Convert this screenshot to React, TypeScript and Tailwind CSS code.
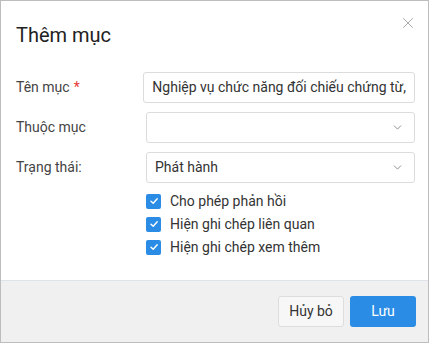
import { ChevronDown, X } from 'lucide-react'

type FieldProps = {
  label: string
  required?: boolean
  children: React.ReactNode
}

function Field({ label, required, children }: FieldProps) {
  return (
    <div className="flex items-center h-[31px]">
      <label className="w-[130px] text-[14px] text-[#444]">
        {label}
        {required && <span className="text-[#e53935] ml-[4px]">*</span>}
      </label>
      <div className="flex-1">{children}</div>
    </div>
  )
}

function Select({ value }: { value?: string }) {
  return (
    <div className="flex items-center justify-between h-[31px] border border-[#dcdcdc] rounded-[3px] pl-[8px] pr-[10px] text-[14px] text-[#333]">
      <span>{value}</span>
      <ChevronDown size={13} strokeWidth={1.5} className="text-[#777]" />
    </div>
  )
}

function Check({ label }: { label: string }) {
  return (
    <div className="flex items-center gap-[9px] h-[22px]">
      <span className="w-[15px] h-[15px] rounded-[2px] bg-[#2b8ce6] flex items-center justify-center">
        <svg width="10" height="10" viewBox="0 0 10 10" fill="none">
          <path d="M2 5.2 L4.2 7.3 L8.2 2.8" stroke="#fff" strokeWidth="1.4" strokeLinecap="round" strokeLinejoin="round" />
        </svg>
      </span>
      <span className="text-[14px] text-[#333]">{label}</span>
    </div>
  )
}

export default function App() {
  return (
    <div className="w-[429px] h-[343px] border border-[#bdbdbd] bg-white flex flex-col font-['Roboto',sans-serif]">
      <div className="flex items-start justify-between pl-[15px] pr-[11px] pt-[20px] h-[70px]">
        <h2 className="text-[20px] leading-[28px] text-[#222]">Thêm mục</h2>
        <X size={18} strokeWidth={1.1} className="text-[#999] mt-[-7px]" />
      </div>

      <div className="flex-1 flex flex-col pl-[15px] pr-[13px] pt-[1px]">
        <div className="flex flex-col gap-[9px]">
          <Field label="Tên mục" required>
            <div className="h-[31px] border border-[#dcdcdc] rounded-[3px] px-[8px] flex items-center text-[14px] text-[#333] whitespace-nowrap overflow-hidden">
              Nghiệp vụ chức năng đối chiếu chứng từ,
            </div>
          </Field>
          <Field label="Thuộc mục">
            <Select />
          </Field>
          <Field label="Trạng thái:">
            <Select value="Phát hành" />
          </Field>
        </div>
        <div className="flex flex-col pl-[130px] pt-[7px] gap-[1px]">
          <Check label="Cho phép phản hồi" />
          <Check label="Hiện ghi chép liên quan" />
          <Check label="Hiện ghi chép xem thêm" />
        </div>
      </div>

      <div className="h-[62px] border-t border-[#dde3e8] bg-[#f0f0f0] flex items-center justify-end gap-[6px] pr-[12px]">
        <button className="h-[31px] w-[66px] border border-[#dddddd] bg-[#f7f7f7] rounded-[3px] text-[14px] text-[#333]">
          Hủy bỏ
        </button>
        <button className="h-[31px] w-[66px] bg-[#2b8ce6] rounded-[3px] text-[14px] text-white">
          Lưu
        </button>
      </div>
    </div>
  )
}
